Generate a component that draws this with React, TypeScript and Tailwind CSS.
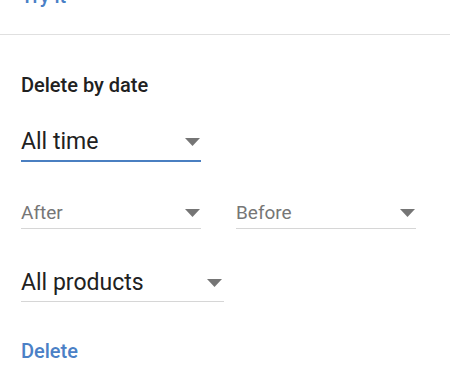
function Caret() {
  return (
    <svg width="15" height="8" viewBox="0 0 15 8" className="shrink-0">
      <path d="M0 0h15L7.5 8z" fill="#757575" />
    </svg>
  );
}

function Dropdown({
  label,
  width,
  size,
  active,
  muted,
}: {
  label: string;
  width: string;
  size: "lg" | "sm";
  active?: boolean;
  muted?: boolean;
}) {
  return (
    <div
      className={[
        "flex items-center justify-between",
        width,
        size === "lg" ? "text-[23px] leading-[28px]" : "text-[19px] leading-[24px]",
        active
          ? "pb-1 border-b-2 border-[#4a7fc1]"
          : size === "lg"
            ? "pb-[4.5px] border-b border-[#d6d6d6]"
            : "pb-[3.5px] border-b border-[#d6d6d6]",
      ].join(" ")}
    >
      <span className={muted ? "text-[#767676]" : "text-[#212121]"}>{label}</span>
      <span className={size === "lg" && !active ? "mr-[2px]" : "mr-px"}>
        <Caret />
      </span>
    </div>
  );
}

export default function App() {
  return (
    <div className="w-[450px] h-[388px] overflow-hidden bg-white font-['Roboto',sans-serif]">
      {/* bottom of the previous card */}
      <div className="h-[34px] px-[21px] flex flex-col">
        <div className="-mt-[14px] text-[20px] leading-[20px] font-medium text-[#4a80c6]">Try it</div>
      </div>
      <div className="h-px bg-[#e0e0e0]" />

      <div className="px-[21px] flex flex-col items-start">
        <h2 className="mt-[38px] text-[20px] leading-[24px] font-medium text-[#212121]">
          Delete by date
        </h2>

        <div className="mt-[31px]">
          <Dropdown label="All time" width="w-[180px]" size="lg" active />
        </div>

        <div className="mt-[38.5px] flex gap-[35px]">
          <Dropdown label="After" width="w-[180px]" size="sm" muted />
          <Dropdown label="Before" width="w-[180px]" size="sm" muted />
        </div>

        <div className="mt-[39.5px]">
          <Dropdown label="All products" width="w-[203px]" size="lg" />
        </div>

        <button className="mt-[36.5px] text-[20px] leading-[24px] font-medium text-[#4a80c6]">
          Delete
        </button>
      </div>
    </div>
  );
}
